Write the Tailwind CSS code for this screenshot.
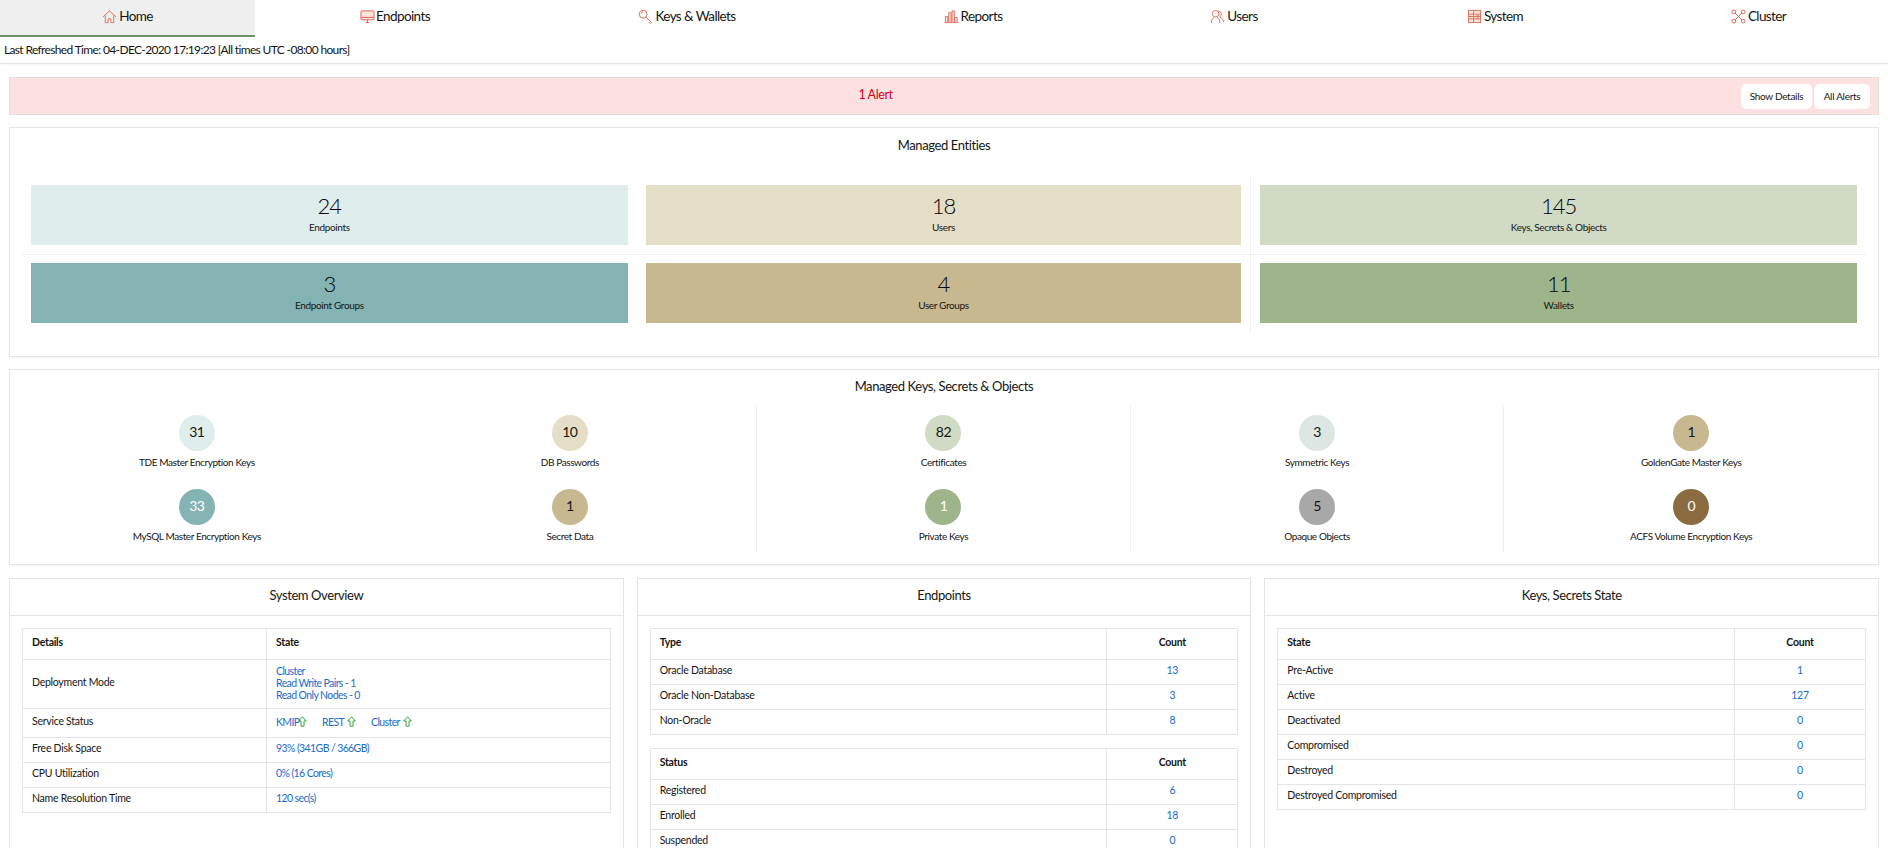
<!DOCTYPE html>
<html lang="en">

<head>
    <meta charset="UTF-8">
    <title>Home</title>
    <script src="https://cdn.jsdelivr.net/npm/@tailwindcss/browser@4"></script>
</head>

<body class="h-[848px] overflow-hidden bg-white text-[#161513] font-['Lato',sans-serif] text-[11px]">
    <!-- top nav -->
    <div class="flex h-[37px] text-[13.5px] tracking-[-0.6px]">
        <div class="w-[255px] flex items-center justify-center gap-[2px] h-[37px] pb-[3px] bg-[#efefef] border-b-2 border-[#6c9460]">
            <svg class="w-[15px] h-[15px]" viewBox="0 0 16 16" fill="none" stroke="#d9705f" stroke-width="1"><path d="M1 8.500 8 2l7 6.500M3.500 7v7.500h3v-4h3v4h3V7"/></svg>
            <span>Home</span>
        </div>
        <div class="w-[280px] flex items-center justify-center gap-[1px] pb-[5px]">
            <svg class="w-[15px] h-[15px]" viewBox="0 0 16 16" fill="#fbe3df" stroke="#d9604f" stroke-width="1"><rect x="1" y="2" width="14" height="9.500" rx="1"/><path d="M1 9h14M6 14.500h4M8 11.500v3"/></svg>
            <span>Endpoints</span>
        </div>
        <div class="w-[304px] flex items-center justify-center gap-[2px] pb-[5px]">
            <svg class="w-[15px] h-[15px]" viewBox="0 0 16 16" fill="none" stroke="#d9705f" stroke-width="1"><circle cx="5.500" cy="5.500" r="4.200"/><path d="M8.500 8.500 14.500 14.500l-1.500 1-1.500-1.500M11 11l-1.200 1.200"/><path d="M3.500 5a2 2 0 0 1 2-2"/></svg>
            <span>Keys &amp; Wallets</span>
        </div>
        <div class="w-[268px] flex items-center justify-center gap-[2px] pb-[5px]">
            <svg class="w-[15px] h-[15px]" viewBox="0 0 16 16" fill="#fbe3df" stroke="#d9705f" stroke-width="1"><path d="M1.500 14V8h2.500v6M5 14V4h2.500v10M8.500 14V2h2.500v12M11.500 14V9h2.500v5M.5 14.500h15"/></svg>
            <span>Reports</span>
        </div>
        <div class="w-[254px] flex items-center justify-center gap-[2px] pb-[5px]">
            <svg class="w-[15px] h-[15px]" viewBox="0 0 16 16" fill="none" stroke="#d9705f" stroke-width="1"><circle cx="6" cy="5" r="3.500"/><path d="M1.500 15c0-3.500 1-5 3-6M10.500 15c0-3.500-1-5-3-6M9 2a3.500 3.500 0 0 1 3 3.500c0 1.500-.8 2.500-1.800 3.200 2.500.7 4.300 2.800 4.300 5.300"/></svg>
            <span>Users</span>
        </div>
        <div class="w-[268px] flex items-center justify-center gap-[2px] pb-[5px]">
            <svg class="w-[15px] h-[15px]" viewBox="0 0 16 16" fill="#fbe3df" stroke="#d9705f" stroke-width="1"><rect x="1.500" y="1.500" width="13" height="13"/><path d="M1.500 5.500h13M1.500 8h13M1.500 10.500h13M7 1.500v13M10 7h2.500M10 9.500h2.500"/></svg>
            <span>System</span>
        </div>
        <div class="flex-1 flex items-center justify-center gap-[2px] pb-[5px]">
            <svg class="w-[15px] h-[15px]" viewBox="0 0 16 16" fill="none" stroke="#d9604f" stroke-width="1"><circle cx="3" cy="3" r="2"/><circle cx="13" cy="3" r="2"/><circle cx="3" cy="13" r="2"/><circle cx="13" cy="13" r="2"/><path d="M4.500 4.500 11.500 11.500M11.500 4.500 4.500 11.500"/></svg>
            <span>Cluster</span>
        </div>
    </div>

    <div class="h-[27px] flex items-center pl-[4px] text-[12px] tracking-[-0.65px] border-b border-[#e4e4e4] shadow-[0_1px_2px_rgba(0,0,0,0.05)]">
        Last Refreshed Time: 04-DEC-2020 17:19:23 [All times UTC -08:00 hours]
    </div>

    <div class="px-[9px] pt-[13px]">
        <!-- alert -->
        <div class="flex items-center h-[38px] bg-[#fde0e0] border border-[#ebdcdc]">
            <div class="flex-1 text-center text-[12.5px] tracking-[-0.4px] pb-[1px] text-[#d3001f]">1 Alert</div>
            <div class="flex gap-[2px] pr-[8px]">
                <button class="w-[71px] h-[25px] bg-white rounded-[5px] text-[10px] tracking-[-0.3px]">Show Details</button>
                <button class="w-[56px] h-[25px] bg-white rounded-[5px] text-[10px] tracking-[-0.3px]">All Alerts</button>
            </div>
        </div>

        <!-- managed entities -->
        <div class="mt-[12px] h-[230px] border border-[#e4e4e4] shadow-[0_1px_2px_rgba(0,0,0,0.05)]">
            <div class="h-[48px] pt-[7px] text-center text-[13px] tracking-[-0.4px] leading-[20px]">Managed Entities</div>
            <div class="grid grid-cols-3 mx-[12px] text-[10px] tracking-[-0.35px]">
                <div class="border-b border-[#efefef] p-[9px]">
                    <div class="h-[60px] bg-[#e0eded] flex flex-col items-center">
                        <div class="text-[22px] leading-[26px] mt-[8px] font-light text-black tracking-[-1px]">24</div>
                        <div class="leading-[14px] mt-[1px]">Endpoints</div>
                    </div>
                </div>
                <div class="border-b border-r border-[#efefef] p-[9px]">
                    <div class="h-[60px] bg-[#e5dec6] flex flex-col items-center">
                        <div class="text-[22px] leading-[26px] mt-[8px] font-light text-black tracking-[-1px]">18</div>
                        <div class="leading-[14px] mt-[1px]">Users</div>
                    </div>
                </div>
                <div class="border-b border-[#efefef] p-[9px]">
                    <div class="h-[60px] bg-[#d0dac4] flex flex-col items-center">
                        <div class="text-[22px] leading-[26px] mt-[8px] font-light text-black tracking-[-1px]">145</div>
                        <div class="leading-[14px] mt-[1px]">Keys, Secrets &amp; Objects</div>
                    </div>
                </div>
                <div class="px-[9px] pt-[8px] pb-[9px]">
                    <div class="h-[60px] bg-[#83b3b3] flex flex-col items-center">
                        <div class="text-[22px] leading-[26px] mt-[8px] font-light text-black tracking-[-1px]">3</div>
                        <div class="leading-[14px] mt-[1px]">Endpoint Groups</div>
                    </div>
                </div>
                <div class="border-r border-[#efefef] px-[9px] pt-[8px] pb-[9px]">
                    <div class="h-[60px] bg-[#c8b890] flex flex-col items-center">
                        <div class="text-[22px] leading-[26px] mt-[8px] font-light text-black tracking-[-1px]">4</div>
                        <div class="leading-[14px] mt-[1px]">User Groups</div>
                    </div>
                </div>
                <div class="px-[9px] pt-[8px] pb-[9px]">
                    <div class="h-[60px] bg-[#9eb48b] flex flex-col items-center">
                        <div class="text-[22px] leading-[26px] mt-[8px] font-light text-black tracking-[-1px]">11</div>
                        <div class="leading-[14px] mt-[1px]">Wallets</div>
                    </div>
                </div>
            </div>
        </div>

        <!-- managed keys -->
        <div class="mt-[12px] h-[196px] border border-[#e4e4e4] shadow-[0_1px_2px_rgba(0,0,0,0.05)]">
            <div class="h-[36px] text-center text-[13px] tracking-[-0.4px] leading-[32px]">Managed Keys, Secrets &amp; Objects</div>
            <div class="grid grid-cols-5 h-[147px] text-[10px] tracking-[-0.4px]">
                <div class="flex flex-col items-center pt-[9px] gap-[16px]">
                    <div class="flex flex-col items-center">
                        <div class="w-[36px] h-[36px] pb-[3px] rounded-full bg-[#e0eded] flex items-center justify-center text-[14px] tracking-[-0.5px]">31</div>
                        <div class="leading-[22px]">TDE Master Encryption Keys</div>
                    </div>
                    <div class="flex flex-col items-center">
                        <div class="w-[36px] h-[36px] pb-[3px] rounded-full bg-[#83b3b3] text-white flex items-center justify-center text-[14px] tracking-[-0.5px]">33</div>
                        <div class="leading-[22px]">MySQL Master Encryption Keys</div>
                    </div>
                </div>
                <div class="flex flex-col items-center pt-[9px] gap-[16px] border-r border-[#efefef]">
                    <div class="flex flex-col items-center">
                        <div class="w-[36px] h-[36px] pb-[3px] rounded-full bg-[#e5dec6] flex items-center justify-center text-[14px] tracking-[-0.5px]">10</div>
                        <div class="leading-[22px]">DB Passwords</div>
                    </div>
                    <div class="flex flex-col items-center">
                        <div class="w-[36px] h-[36px] pb-[3px] rounded-full bg-[#c8b890] flex items-center justify-center text-[14px] tracking-[-0.5px]">1</div>
                        <div class="leading-[22px]">Secret Data</div>
                    </div>
                </div>
                <div class="flex flex-col items-center pt-[9px] gap-[16px] border-r border-[#efefef]">
                    <div class="flex flex-col items-center">
                        <div class="w-[36px] h-[36px] pb-[3px] rounded-full bg-[#d0dac4] flex items-center justify-center text-[14px] tracking-[-0.5px]">82</div>
                        <div class="leading-[22px]">Certificates</div>
                    </div>
                    <div class="flex flex-col items-center">
                        <div class="w-[36px] h-[36px] pb-[3px] rounded-full bg-[#9eb48b] text-white flex items-center justify-center text-[14px] tracking-[-0.5px]">1</div>
                        <div class="leading-[22px]">Private Keys</div>
                    </div>
                </div>
                <div class="flex flex-col items-center pt-[9px] gap-[16px] border-r border-[#efefef]">
                    <div class="flex flex-col items-center">
                        <div class="w-[36px] h-[36px] pb-[3px] rounded-full bg-[#dce7e3] flex items-center justify-center text-[14px] tracking-[-0.5px]">3</div>
                        <div class="leading-[22px]">Symmetric Keys</div>
                    </div>
                    <div class="flex flex-col items-center">
                        <div class="w-[36px] h-[36px] pb-[3px] rounded-full bg-[#a8a8a8] flex items-center justify-center text-[14px] tracking-[-0.5px]">5</div>
                        <div class="leading-[22px]">Opaque Objects</div>
                    </div>
                </div>
                <div class="flex flex-col items-center pt-[9px] gap-[16px]">
                    <div class="flex flex-col items-center">
                        <div class="w-[36px] h-[36px] pb-[3px] rounded-full bg-[#c8b890] flex items-center justify-center text-[14px] tracking-[-0.5px]">1</div>
                        <div class="leading-[22px]">GoldenGate Master Keys</div>
                    </div>
                    <div class="flex flex-col items-center">
                        <div class="w-[36px] h-[36px] pb-[3px] rounded-full bg-[#8b6b40] text-white flex items-center justify-center text-[14px] tracking-[-0.5px]">0</div>
                        <div class="leading-[22px]">ACFS Volume Encryption Keys</div>
                    </div>
                </div>
            </div>
        </div>

        <!-- bottom cards -->
        <div class="grid grid-cols-3 gap-[13px] mt-[13px]">
            <div class="h-[300px] border border-[#e4e4e4]">
                <div class="h-[37px] border-b border-[#e4e4e4] text-center text-[13px] tracking-[-0.4px] leading-[33px]">System Overview</div>
                <div class="p-[12px]">
                    <table class="w-full table-fixed border-collapse text-[10.5px] tracking-[-0.25px]">
                        <tr class="h-[31px]">
                            <th class="w-[244px] border border-[#e4e4e4] px-[9px] pb-[2px] text-left font-bold">Details</th>
                            <th class="border border-[#e4e4e4] px-[9px] pb-[2px] text-left font-bold">State</th>
                        </tr>
                        <tr class="h-[49px]">
                            <td class="border border-[#e4e4e4] px-[9px] pb-[2px]">Deployment Mode</td>
                            <td class="border border-[#e4e4e4] px-[9px] pb-[2px] text-[#1c6bc9] tracking-[-0.6px] leading-[12px]">Cluster<br>Read Write Pairs - 1<br>Read Only Nodes - 0</td>
                        </tr>
                        <tr class="h-[29px]">
                            <td class="border border-[#e4e4e4] px-[9px] pb-[2px]">Service Status</td>
                            <td class="border border-[#e4e4e4] px-[9px] pb-[2px] text-[#1c6bc9] tracking-[-0.6px]">
                                <div class="flex items-center pt-[2px]">
                                    <span class="w-[22px]">KMIP</span>
                                    <svg class="w-[9px] h-[11px] mb-[3px]" viewBox="0 0 9 11" fill="none" stroke="#3aa03a" stroke-width="1"><path d="M4.500 .8 8.300 5H6v5.200H3V5H.7z"/></svg>
                                    <span class="w-[21px] ml-[15px]">REST</span>
                                    <svg class="w-[9px] h-[11px] mb-[3px] ml-[4px]" viewBox="0 0 9 11" fill="none" stroke="#3aa03a" stroke-width="1"><path d="M4.500 .8 8.300 5H6v5.200H3V5H.7z"/></svg>
                                    <span class="w-[29px] ml-[15px]">Cluster</span>
                                    <svg class="w-[9px] h-[11px] mb-[3px] ml-[3px]" viewBox="0 0 9 11" fill="none" stroke="#3aa03a" stroke-width="1"><path d="M4.500 .8 8.300 5H6v5.200H3V5H.7z"/></svg>
                                </div>
                            </td>
                        </tr>
                        <tr class="h-[25px]">
                            <td class="border border-[#e4e4e4] px-[9px] pb-[2px]">Free Disk Space</td>
                            <td class="border border-[#e4e4e4] px-[9px] pb-[2px] text-[#1c6bc9] tracking-[-0.6px]">93% (341GB / 366GB)</td>
                        </tr>
                        <tr class="h-[25px]">
                            <td class="border border-[#e4e4e4] px-[9px] pb-[2px]">CPU Utilization</td>
                            <td class="border border-[#e4e4e4] px-[9px] pb-[2px] text-[#1c6bc9] tracking-[-0.6px]">0% (16 Cores)</td>
                        </tr>
                        <tr class="h-[25px]">
                            <td class="border border-[#e4e4e4] px-[9px] pb-[2px]">Name Resolution Time</td>
                            <td class="border border-[#e4e4e4] px-[9px] pb-[2px] text-[#1c6bc9] tracking-[-0.6px]">120 sec(s)</td>
                        </tr>
                    </table>
                </div>
            </div>

            <div class="h-[300px] border border-[#e4e4e4]">
                <div class="h-[37px] border-b border-[#e4e4e4] text-center text-[13px] tracking-[-0.4px] leading-[33px]">Endpoints</div>
                <div class="p-[12px]">
                    <table class="w-full table-fixed border-collapse text-[10.5px] tracking-[-0.25px]">
                        <tr class="h-[31px]">
                            <th class="border border-[#e4e4e4] px-[9px] pb-[2px] text-left font-bold">Type</th>
                            <th class="w-[131px] border border-[#e4e4e4] px-[9px] pb-[2px] font-bold">Count</th>
                        </tr>
                        <tr class="h-[25px]">
                            <td class="border border-[#e4e4e4] px-[9px] pb-[2px]">Oracle Database</td>
                            <td class="border border-[#e4e4e4] px-[9px] pb-[2px] text-center text-[#1c6bc9]">13</td>
                        </tr>
                        <tr class="h-[25px]">
                            <td class="border border-[#e4e4e4] px-[9px] pb-[2px]">Oracle Non-Database</td>
                            <td class="border border-[#e4e4e4] px-[9px] pb-[2px] text-center text-[#1c6bc9]">3</td>
                        </tr>
                        <tr class="h-[25px]">
                            <td class="border border-[#e4e4e4] px-[9px] pb-[2px]">Non-Oracle</td>
                            <td class="border border-[#e4e4e4] px-[9px] pb-[2px] text-center text-[#1c6bc9]">8</td>
                        </tr>
                    </table>
                    <table class="w-full table-fixed border-collapse mt-[13px] text-[10.5px] tracking-[-0.25px]">
                        <tr class="h-[31px]">
                            <th class="border border-[#e4e4e4] px-[9px] pb-[2px] text-left font-bold">Status</th>
                            <th class="w-[131px] border border-[#e4e4e4] px-[9px] pb-[2px] font-bold">Count</th>
                        </tr>
                        <tr class="h-[25px]">
                            <td class="border border-[#e4e4e4] px-[9px] pb-[2px]">Registered</td>
                            <td class="border border-[#e4e4e4] px-[9px] pb-[2px] text-center text-[#1c6bc9]">6</td>
                        </tr>
                        <tr class="h-[25px]">
                            <td class="border border-[#e4e4e4] px-[9px] pb-[2px]">Enrolled</td>
                            <td class="border border-[#e4e4e4] px-[9px] pb-[2px] text-center text-[#1c6bc9]">18</td>
                        </tr>
                        <tr class="h-[25px]">
                            <td class="border border-[#e4e4e4] px-[9px] pb-[2px]">Suspended</td>
                            <td class="border border-[#e4e4e4] px-[9px] pb-[2px] text-center text-[#1c6bc9]">0</td>
                        </tr>
                    </table>
                </div>
            </div>

            <div class="h-[300px] border border-[#e4e4e4]">
                <div class="h-[37px] border-b border-[#e4e4e4] text-center text-[13px] tracking-[-0.4px] leading-[33px]">Keys, Secrets State</div>
                <div class="p-[12px]">
                    <table class="w-full table-fixed border-collapse text-[10.5px] tracking-[-0.25px]">
                        <tr class="h-[31px]">
                            <th class="border border-[#e4e4e4] px-[9px] pb-[2px] text-left font-bold">State</th>
                            <th class="w-[131px] border border-[#e4e4e4] px-[9px] pb-[2px] font-bold">Count</th>
                        </tr>
                        <tr class="h-[25px]">
                            <td class="border border-[#e4e4e4] px-[9px] pb-[2px]">Pre-Active</td>
                            <td class="border border-[#e4e4e4] px-[9px] pb-[2px] text-center text-[#1c6bc9]">1</td>
                        </tr>
                        <tr class="h-[25px]">
                            <td class="border border-[#e4e4e4] px-[9px] pb-[2px]">Active</td>
                            <td class="border border-[#e4e4e4] px-[9px] pb-[2px] text-center text-[#1c6bc9]">127</td>
                        </tr>
                        <tr class="h-[25px]">
                            <td class="border border-[#e4e4e4] px-[9px] pb-[2px]">Deactivated</td>
                            <td class="border border-[#e4e4e4] px-[9px] pb-[2px] text-center text-[#1c6bc9]">0</td>
                        </tr>
                        <tr class="h-[25px]">
                            <td class="border border-[#e4e4e4] px-[9px] pb-[2px]">Compromised</td>
                            <td class="border border-[#e4e4e4] px-[9px] pb-[2px] text-center text-[#1c6bc9]">0</td>
                        </tr>
                        <tr class="h-[25px]">
                            <td class="border border-[#e4e4e4] px-[9px] pb-[2px]">Destroyed</td>
                            <td class="border border-[#e4e4e4] px-[9px] pb-[2px] text-center text-[#1c6bc9]">0</td>
                        </tr>
                        <tr class="h-[25px]">
                            <td class="border border-[#e4e4e4] px-[9px] pb-[2px]">Destroyed Compromised</td>
                            <td class="border border-[#e4e4e4] px-[9px] pb-[2px] text-center text-[#1c6bc9]">0</td>
                        </tr>
                    </table>
                </div>
            </div>
        </div>
    </div>
</body>

</html>
